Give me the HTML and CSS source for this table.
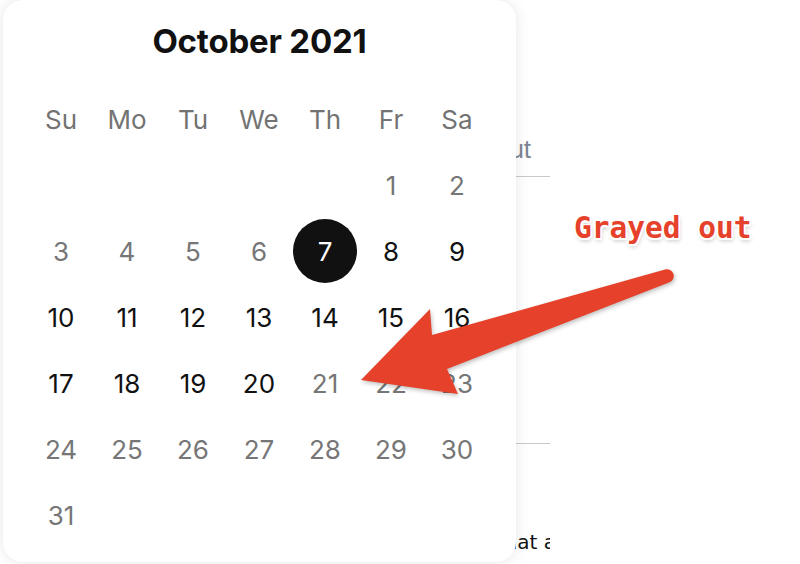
FILE: index.html
```html
<!DOCTYPE html>
<html lang="en">
<head>
<meta charset="utf-8">
<title>Date picker</title>
<link rel="stylesheet" href="styles.css">
</head>
<body>
  <main class="page">
    <div class="form">
      <div class="field"><span class="placeholder">Check out</span></div>
      <div class="field field-second"></div>
      <p class="note">Note that all dates are local</p>
    </div>
  </main>

  <section class="calendar" aria-label="Date picker">
    <h2 class="month">October 2021</h2>
    <div class="grid">
      <span class="wd">Su</span><span class="wd">Mo</span><span class="wd">Tu</span><span class="wd">We</span><span class="wd">Th</span><span class="wd">Fr</span><span class="wd">Sa</span>

      <span class="day empty"></span><span class="day empty"></span><span class="day empty"></span><span class="day empty"></span><span class="day empty"></span>
      <span class="day off">1</span><span class="day off">2</span>

      <span class="day off">3</span><span class="day off">4</span><span class="day off">5</span><span class="day off">6</span>
      <span class="day"><span class="selected">7</span></span><span class="day">8</span><span class="day">9</span>

      <span class="day">10</span><span class="day">11</span><span class="day">12</span><span class="day">13</span><span class="day">14</span><span class="day">15</span><span class="day">16</span>

      <span class="day">17</span><span class="day">18</span><span class="day">19</span><span class="day">20</span><span class="day off">21</span><span class="day off">22</span><span class="day off">23</span>

      <span class="day off">24</span><span class="day off">25</span><span class="day off">26</span><span class="day off">27</span><span class="day off">28</span><span class="day off">29</span><span class="day off">30</span>

      <span class="day off">31</span>
    </div>
  </section>

  <div class="annotation">
    <span class="label">Grayed out</span>
    <svg class="arrow" width="800" height="564" viewBox="0 0 800 564" aria-hidden="true">
      <path d="M665 269.5 L432 335 L430 309 L361 380 L458 394 L447 369 L669 282.5 A6.5 6.5 0 0 0 665 269.5 Z" fill="#e6412a"/>
    </svg>
  </div>
</body>
</html>
```

FILE: styles.css
```css
* { box-sizing: border-box; }

html, body {
  margin: 0;
  padding: 0;
}

body {
  width: 800px;
  height: 564px;
  overflow: hidden;
  background: #ffffff;
  font-family: Inter, "Noto Sans", sans-serif;
  position: relative;
}

/* background page (under the popover) */
.page {
  padding-left: 414px;
}

.form {
  width: 136px;
  overflow: hidden;
  padding-top: 134px;
}

.field {
  height: 43px;
  border-bottom: 1px solid #c9c9c9;
  display: flex;
  align-items: flex-start;
}

.placeholder {
  font-family: "Liberation Sans", Arial, sans-serif;
  font-size: 26px;
  line-height: 30px;
  color: #7d8593;
  white-space: nowrap;
}

.field-second {
  margin-top: 224px;
}

.note {
  margin: 86px 0 0 29px;
  font-family: "DejaVu Sans", sans-serif;
  font-size: 20px;
  line-height: 24px;
  color: #111;
  white-space: nowrap;
}

/* popover calendar */
.calendar {
  position: absolute;
  left: 3px;
  top: 0;
  width: 513px;
  height: 562px;
  background: #ffffff;
  border-radius: 20px;
  box-shadow: 0 0 14px rgba(0, 0, 0, 0.10);
  padding-left: 25px;
}

.month {
  margin: 0;
  padding-top: 22px;
  height: 86px;
  padding-right: 25px;
  font-size: 33px;
  line-height: 38px;
  font-weight: 700;
  color: #111;
  text-align: center;
  letter-spacing: -0.2px;
}

.grid {
  display: grid;
  grid-template-columns: repeat(7, 66px);
  grid-auto-rows: 66px;
}

.wd, .day {
  display: flex;
  align-items: center;
  justify-content: center;
  font-size: 26px;
  font-weight: 400;
}

.wd { color: #737373; }

.day { color: #111; }

.day.off { color: #767676; }

.selected {
  width: 64px;
  height: 64px;
  border-radius: 50%;
  background: #111;
  color: #fff;
  display: flex;
  align-items: center;
  justify-content: center;
}

/* annotation overlay */
.annotation {
  position: absolute;
  inset: 0;
  pointer-events: none;
}

.label {
  position: absolute;
  left: 574px;
  top: 210px;
  font-family: "DejaVu Sans Mono", monospace;
  font-weight: 700;
  font-size: 29.5px;
  line-height: 36px;
  color: #e6412a;
  white-space: nowrap;
  text-shadow:
    -1.5px 0 0 #fff, 1.5px 0 0 #fff, 0 -1.5px 0 #fff, 0 1.5px 0 #fff,
    -1.5px -1.5px 0 #fff, 1.5px 1.5px 0 #fff, -1.5px 1.5px 0 #fff, 1.5px -1.5px 0 #fff,
    1px 3px 4px rgba(0, 0, 0, 0.25);
}

.arrow {
  position: absolute;
  left: 0;
  top: 0;
  filter: drop-shadow(1px 2px 2px rgba(0, 0, 0, 0.25));
}
```
